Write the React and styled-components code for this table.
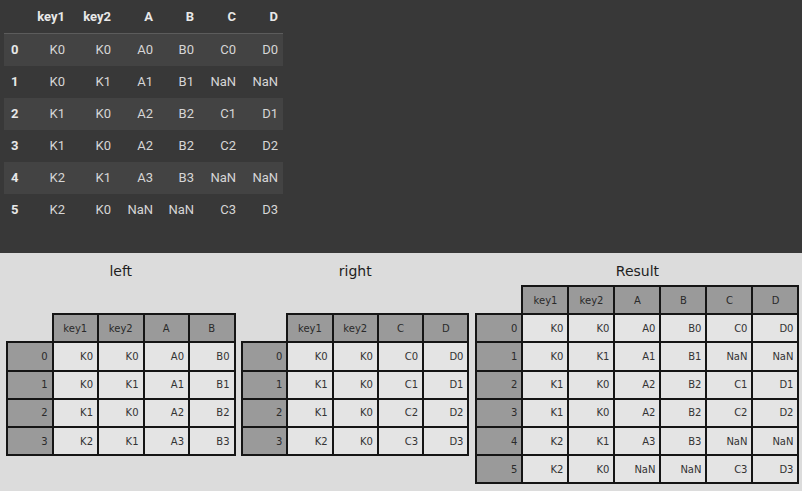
import React from "react";
import styled, { createGlobalStyle } from "styled-components";

const Global = createGlobalStyle`
  html, body { margin: 0; padding: 0; background: #dcdcdc; }
  body { width: 802px; height: 491px; overflow: hidden; }
`;

const Page = styled.div`
  width: 802px;
  height: 491px;
  display: flex;
  flex-direction: column;
`;

const DarkPanel = styled.div`
  height: 253px;
  background: #383838;
  padding-left: 4px;
  box-sizing: border-box;
  font-family: Roboto, "Liberation Sans", sans-serif;
  font-size: 13px;
`;

const DfTable = styled.table`
  border-collapse: collapse;
  border-spacing: 0;
  table-layout: fixed;
`;

const HeadCell = styled.th`
  height: 33px;
  width: ${(p) => p.$w}px;
  padding: 0 ${(p) => (p.$index ? 0 : 5)}px 0 ${(p) => (p.$index ? 7 : 0)}px;
  text-align: ${(p) => (p.$index ? "left" : "right")};
  color: #e8e8e8;
  font-weight: 700;
  border-bottom: 1px solid #5c5c5c;
  box-sizing: border-box;
`;

const BodyRow = styled.tr`
  background: ${(p) => (p.$striped ? "#434343" : "transparent")};
`;

const IndexCell = styled.th`
  height: 32px;
  padding: 0 0 0 7px;
  text-align: left;
  color: #e8e8e8;
  font-weight: 700;
`;

const ValueCell = styled.td`
  height: 32px;
  padding: 0 5px 0 0;
  text-align: right;
  color: #d6d6d6;
`;

const LightPanel = styled.div`
  flex: 1;
  background: #dcdcdc;
  display: flex;
  align-items: flex-start;
  padding: 8px 0 0 8px;
  box-sizing: border-box;
  font-family: "DejaVu Sans", sans-serif;
`;

const Diagram = styled.div`
  display: flex;
  flex-direction: column;
  align-items: center;
  margin-left: ${(p) => p.$ml || 0}px;
`;

const Title = styled.div`
  font-size: 14px;
  line-height: 20px;
  height: 20px;
  color: #1e1e1e;
  margin-bottom: ${(p) => p.$drop}px;
`;

const Grid = styled.div`
  display: grid;
  grid-template-columns: repeat(${(p) => p.$cols}, ${(p) => p.$cw}px);
  grid-auto-rows: 26.2px;
  gap: 2px;
`;

const Cell = styled.div`
  outline: ${(p) => (p.$empty ? "none" : "2px solid #151515")};
  background: ${(p) =>
    p.$empty ? "transparent" : p.$head ? "#9a9a9a" : "#e4e4e4"};
  display: flex;
  align-items: center;
  justify-content: ${(p) => (p.$center ? "center" : "flex-end")};
  padding-right: ${(p) => (p.$center ? 0 : 4)}px;
  font-size: 10px;
  color: ${(p) => (p.$head ? "#2a2a2a" : "#333")};
  box-sizing: border-box;
`;

const resultCols = ["key1", "key2", "A", "B", "C", "D"];
const resultRows = [
  ["K0", "K0", "A0", "B0", "C0", "D0"],
  ["K0", "K1", "A1", "B1", "NaN", "NaN"],
  ["K1", "K0", "A2", "B2", "C1", "D1"],
  ["K1", "K0", "A2", "B2", "C2", "D2"],
  ["K2", "K1", "A3", "B3", "NaN", "NaN"],
  ["K2", "K0", "NaN", "NaN", "C3", "D3"],
];

const leftCols = ["key1", "key2", "A", "B"];
const leftRows = [
  ["K0", "K0", "A0", "B0"],
  ["K0", "K1", "A1", "B1"],
  ["K1", "K0", "A2", "B2"],
  ["K2", "K1", "A3", "B3"],
];

const rightCols = ["key1", "key2", "C", "D"];
const rightRows = [
  ["K0", "K0", "C0", "D0"],
  ["K1", "K0", "C1", "D1"],
  ["K1", "K0", "C2", "D2"],
  ["K2", "K0", "C3", "D3"],
];

const widths = [24, 42, 46, 42, 41, 42, 42];

function FrameDiagram({ title, cols, rows, drop, ml, cw }) {
  return (
    <Diagram $ml={ml}>
      <Title $drop={drop}>{title}</Title>
      <Grid $cols={cols.length + 1} $cw={cw}>
        <Cell $empty />
        {cols.map((c) => (
          <Cell key={c} $head $center>
            {c}
          </Cell>
        ))}
        {rows.map((r, i) => (
          <React.Fragment key={i}>
            <Cell $head>{i}</Cell>
            {r.map((v, j) => (
              <Cell key={j}>{v}</Cell>
            ))}
          </React.Fragment>
        ))}
      </Grid>
    </Diagram>
  );
}

export default function App() {
  return (
    <Page>
      <Global />
      <DarkPanel>
        <DfTable>
          <thead>
            <tr>
              <HeadCell $index $w={widths[0]}></HeadCell>
              {resultCols.map((c, i) => (
                <HeadCell key={c} $w={widths[i + 1]}>
                  {c}
                </HeadCell>
              ))}
            </tr>
          </thead>
          <tbody>
            {resultRows.map((r, i) => (
              <BodyRow key={i} $striped={i % 2 === 0}>
                <IndexCell>{i}</IndexCell>
                {r.map((v, j) => (
                  <ValueCell key={j}>{v}</ValueCell>
                ))}
              </BodyRow>
            ))}
          </tbody>
        </DfTable>
      </DarkPanel>
      <LightPanel>
        <FrameDiagram title="left" cols={leftCols} rows={leftRows} drop={34.2} cw={43.5} />
        <FrameDiagram title="right" cols={rightCols} rows={rightRows} drop={34.2} cw={43.3} ml={9.5} />
        <FrameDiagram title="Result" cols={resultCols} rows={resultRows} drop={6} cw={44} ml={10} />
      </LightPanel>
    </Page>
  );
}
